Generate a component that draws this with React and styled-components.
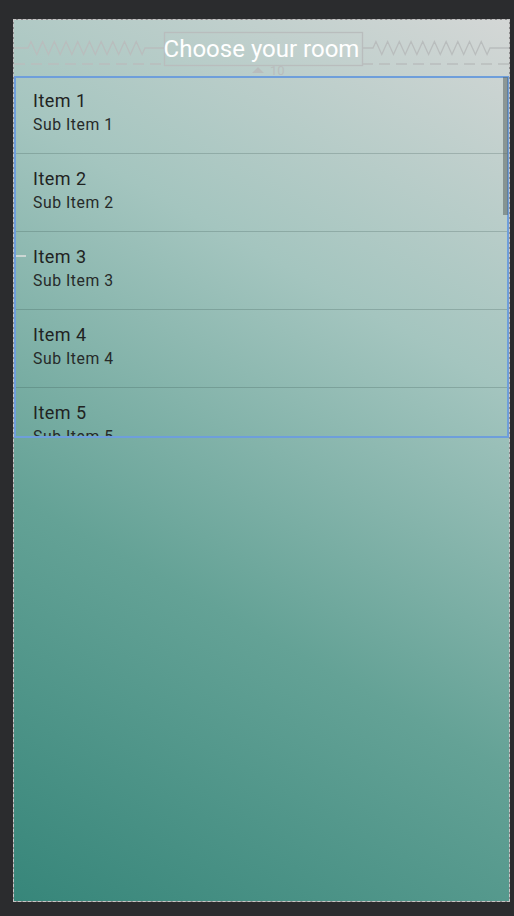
import React from "react";
import styled, { createGlobalStyle } from "styled-components";

const GlobalStyle = createGlobalStyle`
  html, body {
    margin: 0;
    padding: 0;
    background: #2b2c2e;
  }
  body {
    font-family: Roboto, "Noto Sans", "Liberation Sans", sans-serif;
  }
`;

const Page = styled.div`
  width: 514px;
  height: 916px;
  box-sizing: border-box;
  padding: 19px 0 0 13px;
  background: #2b2c2e;
  overflow: hidden;
`;

const Frame = styled.div`
  width: 497px;
  height: 883px;
  box-sizing: border-box;
  border: 1px dashed #c6c6c6;
  background: linear-gradient(29deg, #37867a 0%, #64a296 35%, #a4c5bf 68%, #d4d7d6 100%) padding-box,
    #8c8c8c border-box;
  display: flex;
  flex-direction: column;
`;

const Header = styled.div`
  position: relative;
  height: 56px;
  box-sizing: border-box;
  padding-top: 2px;
  flex: none;
  display: flex;
  align-items: center;
  justify-content: center;
`;

const Title = styled.h1`
  margin: 0;
  font-family: Roboto, "Noto Sans", sans-serif;
  font-weight: 400;
  font-size: 24px;
  line-height: 33px;
  color: #ffffff;
  position: relative;
  z-index: 1;
`;

const Overlay = styled.svg`
  position: absolute;
  left: 0;
  top: 0;
  width: 495px;
  height: 56px;
  pointer-events: none;
`;

const List = styled.div`
  position: relative;
  height: 362px;
  flex: none;
  overflow: hidden;
  outline: 2px solid #6e9edb;
  outline-offset: -2px;
`;

const Item = styled.div`
  height: 78px;
  box-sizing: border-box;
  padding: 13px 0 0 19px;
  border-bottom: 1px solid rgba(40, 70, 65, 0.22);
`;

const ItemTitle = styled.div`
  font-size: 18px;
  line-height: 24px;
  letter-spacing: 0.5px;
  color: #1f2322;
`;

const ItemSub = styled.div`
  margin-top: 2px;
  font-size: 15.75px;
  line-height: 20px;
  letter-spacing: 0.55px;
  color: #262a29;
`;

const Scrollbar = styled.div`
  position: absolute;
  right: 1px;
  top: 1px;
  width: 5px;
  height: 138px;
  background: rgba(90, 100, 99, 0.55);
`;

const Tick = styled.div`
  position: absolute;
  left: 2px;
  top: 179px;
  width: 10px;
  height: 2px;
  background: rgba(215, 220, 219, 0.85);
`;

function zigzagPoints(x0, x1, y, amp, peaks) {
  const period = (x1 - x0) / peaks;
  const pts = [];
  for (let i = 0; i < peaks; i++) {
    const s = x0 + i * period;
    pts.push(`${s + period * 0.25},${y - amp}`);
    pts.push(`${s + period * 0.75},${y + amp}`);
    pts.push(`${s + period},${y}`);
  }
  return pts.join(" ");
}

function Decorations() {
  const stroke = "#b9bdbd";
  const left = `0,28 14,28 ${zigzagPoints(14, 131, 28, 6.5, 10)} 150,28`;
  const right = `348,28 359,28 ${zigzagPoints(359, 476, 28, 6.5, 10)} 495,28`;
  return (
    <Overlay viewBox="0 0 495 56">
      <g fill="none" stroke={stroke} strokeWidth="1.3">
        <polyline points={left} />
        <polyline points={right} />
        <rect x="150.5" y="12.5" width="198" height="33" />
        <line x1="0" y1="44" x2="150" y2="44" strokeDasharray="11 6" />
        <line x1="348" y1="44" x2="495" y2="44" strokeDasharray="11 6" />
      </g>
      <path d="M238 53 L244 47 L250 53 Z" fill={stroke} />
      <text x="256" y="55" fontSize="13" fill={stroke} fontFamily="Roboto, sans-serif">10</text>
    </Overlay>
  );
}

const items = [1, 2, 3, 4, 5];

export default function App() {
  return (
    <>
      <GlobalStyle />
      <Page>
        <Frame>
          <Header>
            <Decorations />
            <Title>Choose your room</Title>
          </Header>
          <List>
            {items.map((n) => (
              <Item key={n}>
                <ItemTitle>Item {n}</ItemTitle>
                <ItemSub>Sub Item {n}</ItemSub>
              </Item>
            ))}
            <Tick />
            <Scrollbar />
          </List>
        </Frame>
      </Page>
    </>
  );
}
